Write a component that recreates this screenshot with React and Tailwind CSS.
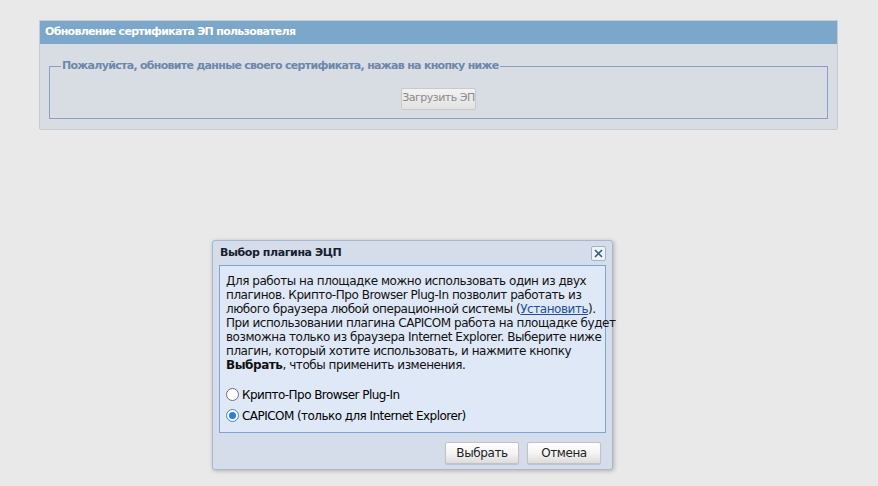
import React from 'react';

const font = { fontFamily: '"DejaVu Sans", Verdana, sans-serif' };

const Radio = ({ checked, label }) => (
  <label className="flex items-center gap-[3px] h-[21px] text-[12px] text-[#000]">
    <span
      className={`w-[13px] h-[13px] rounded-full border flex items-center justify-center ${
        checked ? 'border-[#3b87d4] bg-white' : 'border-[#707070] bg-white'
      }`}
    >
      {checked && <span className="w-[7px] h-[7px] rounded-full bg-[#2c7de0]" />}
    </span>
    <span>{label}</span>
  </label>
);

const Button = ({ children }) => (
  <button className="w-[74px] h-[22px] rounded-[2px] border border-[#c2c2c2] bg-gradient-to-b from-[#ffffff] via-[#f4f4f4] to-[#dcdcdc] text-[12px] text-[#222] tracking-[-0.4px] shadow-[0_1px_1px_rgba(0,0,0,0.12)]">
    {children}
  </button>
);

export default function App() {
  return (
    <div className="relative w-full h-[486px] bg-[#e9e9e9] overflow-hidden" style={font}>
      {/* Панель обновления сертификата */}
      <div className="pt-[20px] pl-[39px] pr-[40px]">
        <div className="border border-[#c6cbd2] rounded-b-[2px] bg-[#d8dde4]">
          <div className="h-[23px] bg-[#7ba7cb] pl-[5px] flex items-center text-[11px] font-bold text-white tracking-[-0.7px]">
            Обновление сертификата ЭП пользователя
          </div>
          <div className="px-[9px] pt-[14px] pb-[10px]">
            <fieldset className="border border-[#8a9fc3] px-[8px] h-[61px]">
              <legend className="px-[1px] ml-[3px] text-[11px] font-bold text-[#6d87ab] tracking-[-0.7px]">
                Пожалуйста, обновите данные своего сертификата, нажав на кнопку ниже
              </legend>
              <div className="flex justify-center pt-[13px]">
                <button className="w-[75px] h-[22px] rounded-[2px] border border-[#c9c9c9] bg-gradient-to-b from-[#f2f2f2] to-[#e2e2e2] text-[11px] text-[#8a8a8a] tracking-[-0.5px]">
                  Загрузить ЭП
                </button>
              </div>
            </fieldset>
          </div>
        </div>
      </div>

      {/* Диалог выбора плагина */}
      <div className="absolute left-[212px] top-[240px] w-[401px] h-[230px] rounded-[3px] border border-[#a9b8cc] bg-[#d4dde9] shadow-[1px_1px_4px_rgba(0,0,0,0.25)] px-[6px]">
        <div className="h-[24px] flex items-center justify-between">
          <span className="text-[11px] font-bold text-[#15212e] pl-[1px] tracking-[-0.4px]">Выбор плагина ЭЦП</span>
          <span className="w-[15px] h-[15px] border border-[#9fb3d1] bg-[#eef3fa] rounded-[2px] flex items-center justify-center">
            <svg width="9" height="9" viewBox="0 0 9 9">
              <path d="M1 1L8 8M8 1L1 8" stroke="#3a5a8c" strokeWidth="1.6" />
            </svg>
          </span>
        </div>
        <div className="h-[168px] border border-[#7ea4d8] bg-[#dfe8f6] px-[6px] pt-[8px]">
          <p className="text-[12px] leading-[14px] text-[#111] tracking-[-0.45px] whitespace-nowrap">
            Для работы на площадке можно использовать один из двух
            <br />
            плагинов. Крипто-Про Browser Plug-In позволит работать из
            <br />
            любого браузера любой операционной системы (<a className="text-[#1f4f9c] underline">Установить</a>).
            <br />
            При использовании плагина CAPICOM работа на площадке будет
            <br />
            возможна только из браузера Internet Explorer. Выберите ниже
            <br />
            плагин, который хотите использовать, и нажмите кнопку
            <br />
            <b>Выбрать</b>, чтобы применить изменения.
          </p>
          <div className="mt-[12px] tracking-[-0.55px]">
            <Radio label="Крипто-Про Browser Plug-In" />
            <Radio checked label="CAPICOM (только для Internet Explorer)" />
          </div>
        </div>
        <div className="flex justify-end gap-[8px] pt-[9px] pr-[5px]">
          <Button>Выбрать</Button>
          <Button>Отмена</Button>
        </div>
      </div>
    </div>
  );
}
